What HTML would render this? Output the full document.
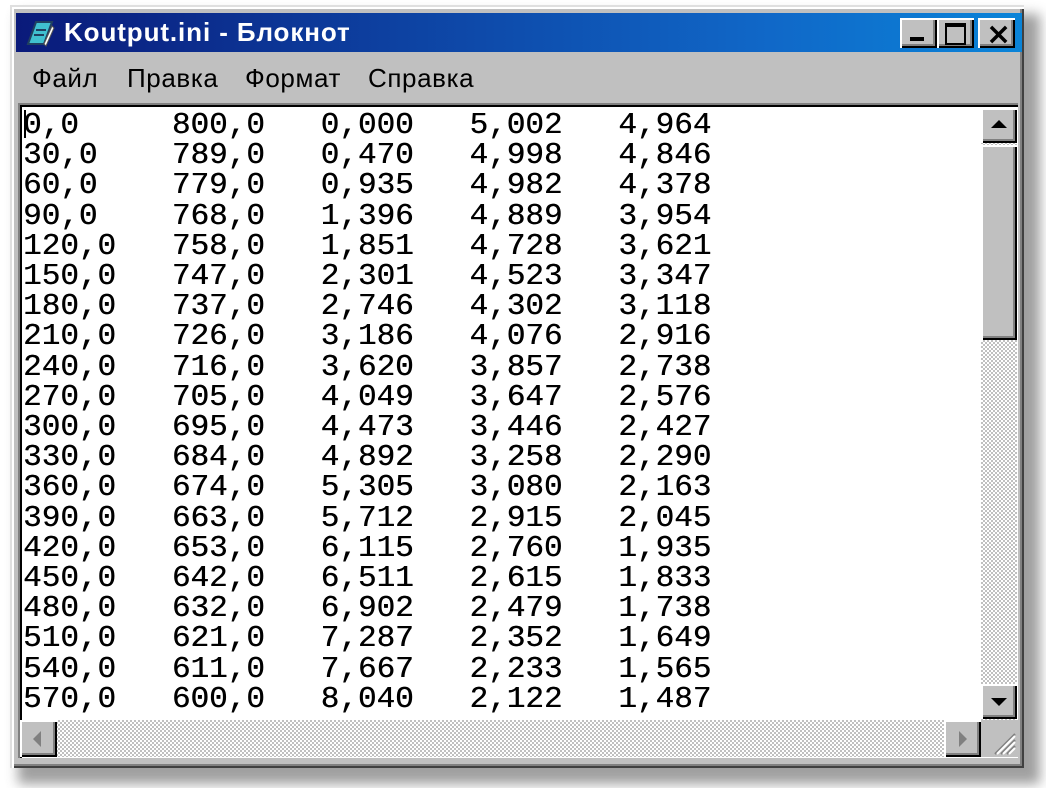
<!DOCTYPE html>
<html><head><meta charset="utf-8"><style>
body{margin:0;width:1046px;height:788px;background:#fff;position:relative;overflow:hidden;font-family:"Liberation Sans",sans-serif}
.abs{position:absolute}
#shadow{left:18px;top:14px;width:1022px;height:770px;background:#888;filter:blur(6px);opacity:.8}
#win{left:10px;top:5px;width:1014px;height:763px;background:#c0c0c0;box-shadow:inset 2px 2px 0 #dfdfdf,inset 4px 4px 0 #fff,inset -2px -2px 0 #404040,inset -4px -4px 0 #808080}
#title{left:16px;top:13px;width:1006px;height:39px;background:linear-gradient(90deg,#0a1a7a,#1068c8 75%,#0a84d8)}
#title span{position:absolute;left:48px;top:4px;color:#fff;font-weight:bold;font-size:26px;letter-spacing:.9px}
.btn{background:#c0c0c0;box-shadow:inset 2px 2px 0 #fff,inset -2px -2px 0 #000,inset -4px -4px 0 #808080}
#menu{left:32px;top:63px;font-size:26px;color:#000;letter-spacing:.6px;word-spacing:0}
#menu span{position:absolute;white-space:nowrap}
#edit{left:18px;top:103px;width:1000px;height:655px;background:#fff;box-shadow:inset 2px 2px 0 #808080,inset 4px 4px 0 #000}
pre{margin:0;position:absolute;left:23px;top:111px;font-family:"Liberation Mono",monospace;font-size:31px;line-height:30.2px;color:#000;text-shadow:0.4px 0 0 #000}
.chk{background-color:#e8e8e8;background-image:repeating-conic-gradient(#c0c0c0 0 25%,#fff 0 50%);background-size:4px 4px}
</style></head><body>
<div id="shadow" class="abs"></div>
<div id="win" class="abs"></div>
<div id="title" class="abs">
<svg class="abs" style="left:6px;top:5px" width="34" height="30" viewBox="0 0 34 30"><path d="M6 26 L14 4 L30 4 L22 26 Z" fill="#40c0d0" stroke="#204060" stroke-width="2"/><path d="M14 12h10M12 17h10" stroke="#204060" stroke-width="2"/><path d="M22 26 L30 8 L32 10 L24 28 Z" fill="#fff" stroke="#555" stroke-width="1"/></svg>
<span>Koutput.ini - Блокнот</span>
<div class="abs btn" style="left:884px;top:5px;width:37px;height:30px"><div class="abs" style="left:10px;top:19px;width:14px;height:4px;background:#000"></div></div>
<div class="abs btn" style="left:921px;top:5px;width:37px;height:30px"><div class="abs" style="left:8px;top:5px;width:17px;height:16px;border:2px solid #000;border-top-width:4px"></div></div>
<div class="abs btn" style="left:962px;top:5px;width:37px;height:30px"><div class="abs" style="left:8px;top:-1px;font-size:30px;font-weight:bold;color:#000;font-family:'DejaVu Sans'">×</div></div>
</div>
<div id="menu" class="abs"><span style="left:0">Файл</span><span style="left:95px">Правка</span><span style="left:213px">Формат</span><span style="left:336px">Справка</span></div>
<div id="edit" class="abs"></div>
<pre>0,0     800,0   0,000   5,002   4,964
30,0    789,0   0,470   4,998   4,846
60,0    779,0   0,935   4,982   4,378
90,0    768,0   1,396   4,889   3,954
120,0   758,0   1,851   4,728   3,621
150,0   747,0   2,301   4,523   3,347
180,0   737,0   2,746   4,302   3,118
210,0   726,0   3,186   4,076   2,916
240,0   716,0   3,620   3,857   2,738
270,0   705,0   4,049   3,647   2,576
300,0   695,0   4,473   3,446   2,427
330,0   684,0   4,892   3,258   2,290
360,0   674,0   5,305   3,080   2,163
390,0   663,0   5,712   2,915   2,045
420,0   653,0   6,115   2,760   1,935
450,0   642,0   6,511   2,615   1,833
480,0   632,0   6,902   2,479   1,738
510,0   621,0   7,287   2,352   1,649
540,0   611,0   7,667   2,233   1,565
570,0   600,0   8,040   2,122   1,487</pre>
<div class="abs" style="left:24px;top:110px;width:2px;height:28px;background:#000"></div>
<div class="abs chk" style="left:981px;top:108px;width:36px;height:612px"></div>
<div class="abs btn" style="left:981px;top:108px;width:36px;height:35px"><div class="abs" style="left:10px;top:12px;width:0;height:0;border-left:8px solid transparent;border-right:8px solid transparent;border-bottom:8px solid #000"></div></div>
<div class="abs btn" style="left:981px;top:145px;width:36px;height:195px"></div>
<div class="abs btn" style="left:981px;top:684px;width:36px;height:35px"><div class="abs" style="left:10px;top:14px;width:0;height:0;border-left:8px solid transparent;border-right:8px solid transparent;border-top:8px solid #000"></div></div>
<div class="abs chk" style="left:20px;top:720px;width:961px;height:37px"></div>
<div class="abs btn" style="left:20px;top:720px;width:37px;height:37px"><div class="abs" style="left:13px;top:11px;width:0;height:0;border-top:8px solid transparent;border-bottom:8px solid transparent;border-right:8px solid #808080"></div></div>
<div class="abs btn" style="left:944px;top:720px;width:37px;height:37px"><div class="abs" style="left:15px;top:11px;width:0;height:0;border-top:8px solid transparent;border-bottom:8px solid transparent;border-left:8px solid #808080"></div></div>
<div class="abs" style="left:981px;top:720px;width:37px;height:37px;background:#c0c0c0">
<svg width="37" height="37"><g stroke-width="2"><path d="M14 34L34 14M20 34L34 20M26 34L34 26" stroke="#808080"/><path d="M16 34L34 16M22 34L34 22M28 34L34 28" stroke="#fff"/></g></svg></div>
</body></html>
